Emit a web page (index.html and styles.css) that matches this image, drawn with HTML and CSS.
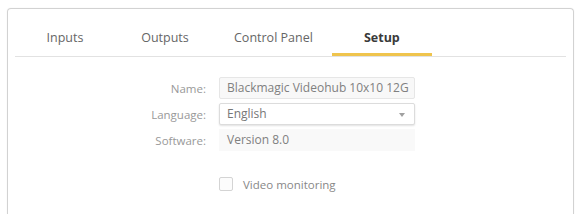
FILE: index.html
```html
<!DOCTYPE html>
<html lang="en">
<head>
    <meta charset="UTF-8">
    <title>Videohub Setup</title>
    <link rel="stylesheet" href="styles.css">
</head>
<body>
    <div class="wrap">
        <div class="panel">
            <div class="tabs">
                <div class="tab">Inputs</div>
                <div class="tab">Outputs</div>
                <div class="tab">Control Panel</div>
                <div class="tab active">Setup</div>
            </div>

            <div class="form">
                <div class="row">
                    <div class="label">Name:</div>
                    <div class="field text">Blackmagic Videohub 10x10 12G</div>
                </div>
                <div class="row">
                    <div class="label">Language:</div>
                    <div class="field select">English<span class="arrow"></span></div>
                </div>
                <div class="row">
                    <div class="label">Software:</div>
                    <div class="field plain">Version 8.0</div>
                </div>
                <div class="row check-row">
                    <div class="label"></div>
                    <span class="checkbox"></span>
                    <span class="check-text">Video monitoring</span>
                </div>
            </div>
        </div>
    </div>
</body>
</html>
```

FILE: styles.css
```css
html, body {
    height: 100%;
}
body {
    margin: 0;
    background-color: #fff;
    font-family: "Open Sans", Arial, sans-serif;
    overflow: hidden;
}
.wrap {
    box-sizing: border-box;
    height: 100%;
    padding: 8px 4px 0 7px;
}
.panel {
    box-sizing: border-box;
    height: 100%;
    border: 1px solid #d2d2d2;
    border-bottom: none;
    border-radius: 4px 4px 0 0;
    box-shadow: 0 0 2px rgba(0,0,0,0.06);
}
.tabs {
    display: flex;
    margin: 0 7px;
    border-bottom: 1px solid #e2e2e2;
}
.tab {
    box-sizing: border-box;
    min-width: 100px;
    height: 47px;
    padding: 20px 19px 0;
    font-size: 12.5px;
    line-height: 18px;
    color: #666;
    text-align: center;
    border-bottom: 3px solid transparent;
}
.tab.active {
    font-weight: bold;
    color: #3a3a3a;
    border-bottom-color: #efc44d;
}
.form {
    padding-top: 20px;
}
.row {
    display: flex;
    align-items: center;
    height: 22px;
    margin-bottom: 4px;
    font-size: 11.5px;
}
.label {
    width: 198px;
    margin-right: 13px;
    text-align: right;
    color: #999;
}
.field {
    box-sizing: border-box;
    width: 196px;
    height: 22px;
    line-height: 20px;
    padding: 0 3px 0 7px;
    font-size: 12px;
    color: #808080;
    white-space: nowrap;
    overflow: hidden;
    position: relative;
}
.text {
    background-color: #f8f8f8;
    border: 1px solid #e6e6e6;
    border-radius: 2px;
}
.select {
    background-color: #fff;
    border: 1px solid #dcdcdc;
    border-radius: 2px;
    box-shadow: 0 1px 2px rgba(0,0,0,0.12);
    color: #777;
}
.arrow {
    position: absolute;
    right: 9px;
    top: 9px;
    border-left: 3px solid transparent;
    border-right: 3px solid transparent;
    border-top: 4px solid #a0a0a0;
}
.plain {
    background-color: #f9f9f9;
    border: 1px solid #f9f9f9;
}
.check-row {
    margin-top: 22px;
}
.checkbox {
    box-sizing: border-box;
    width: 14px;
    height: 14px;
    border: 1px solid #d4d4d4;
    border-radius: 2px;
    background-color: #fcfcfc;
    margin-right: 10px;
}
.check-text {
    color: #888;
}
```
